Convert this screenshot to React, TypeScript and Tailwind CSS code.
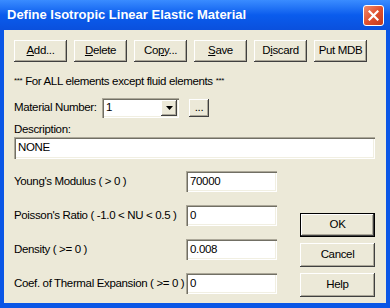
import React from "react";

const raised =
  "shadow-[inset_-1px_-1px_0_#404040,inset_1px_1px_0_#ffffff,inset_-2px_-2px_0_#aca899]";
const sunken =
  "shadow-[inset_1px_1px_0_#aca899,inset_2px_2px_0_#716f64,inset_-1px_-1px_0_#ffffff,inset_-2px_-2px_0_#f1efe2]";

function Btn({ children, className = "" }: { children: React.ReactNode; className?: string }) {
  return (
    <div
      className={`flex items-center justify-center bg-[#ece9d8] text-black whitespace-nowrap shrink-0 ${raised} ${className}`}
    >
      {children}
    </div>
  );
}

function Field({ value, className = "" }: { value: string; className?: string }) {
  return (
    <div className={`flex items-center bg-white pl-[4px] text-black shrink-0 ${sunken} ${className}`}>
      {value}
    </div>
  );
}

const props = [
  { label: "Young's Modulus ( > 0 )", value: "70000" },
  { label: "Poisson's Ratio ( -1.0 < NU < 0.5 )", value: "0" },
  { label: "Density ( >= 0 )", value: "0.008" },
  { label: "Coef. of Thermal Expansion ( >= 0 )", value: "0" },
];

export default function App() {
  return (
    <div className="w-[390px] h-[308px] flex flex-col bg-[#0a56e6] overflow-hidden font-['Liberation_Sans',Arial,sans-serif]">
      {/* ── Title bar ─────────────────────────────── */}
      <div className="h-[30px] flex items-center justify-between pl-[7px] pr-[6px] bg-gradient-to-b from-[#3a8cff] via-[#0a5ced] to-[#0a50dd]">
        <span className="text-white font-bold text-[13px]">
          Define Isotropic Linear Elastic Material
        </span>
        <div className="w-[21px] h-[21px] rounded-[3px] border border-white bg-gradient-to-br from-[#ef8a6c] via-[#e1502e] to-[#c23a1c] flex items-center justify-center">
          <svg width="11" height="11" viewBox="0 0 11 11">
            <path d="M1.5 1.5 L9.5 9.5 M9.5 1.5 L1.5 9.5" stroke="#fff" strokeWidth="2.2" strokeLinecap="square" />
          </svg>
        </div>
      </div>

      {/* ── Body ──────────────────────────────────── */}
      <div className="flex-1 mx-[4px] mb-[5px] bg-[#ece9d8] pl-[10px] pr-[11px] pt-[10px] flex flex-col text-black text-[11.5px] tracking-[-0.35px] whitespace-nowrap">
        <div className="flex gap-[7px]">
          <Btn className="w-[53px] h-[22px]"><span><u>A</u>dd...</span></Btn>
          <Btn className="w-[53px] h-[22px]"><span><u>D</u>elete</span></Btn>
          <Btn className="w-[53px] h-[22px]"><span>Co<u>p</u>y...</span></Btn>
          <Btn className="w-[53px] h-[22px]"><span><u>S</u>ave</span></Btn>
          <Btn className="w-[53px] h-[22px]"><span>D<u>i</u>scard</span></Btn>
          <Btn className="w-[53px] h-[22px]"><span>Put MDB</span></Btn>
        </div>

        <div className="mt-[12px] h-[14px] leading-[14px]">
          <span className="text-[8px] align-top">***</span> For ALL elements except fluid elements <span className="text-[8px] align-top">***</span>
        </div>

        <div className="mt-[10px] flex items-center h-[20px]">
          <span className="w-[88px] shrink-0">Material Number:</span>
          <div className={`w-[77px] h-[20px] shrink-0 bg-white flex items-center justify-between pl-[4px] pr-[2px] ${sunken}`}>
            <span>1</span>
            <div className={`w-[16px] h-[16px] bg-[#ece9d8] flex items-center justify-center ${raised}`}>
              <svg width="7" height="4" viewBox="0 0 7 4"><path d="M0 0 H7 L3.5 4 Z" fill="#000" /></svg>
            </div>
          </div>
          <Btn className="ml-[10px] w-[20px] h-[18px]">...</Btn>
        </div>

        <div className="mt-[4px] h-[14px] leading-[14px]">Description:</div>
        <Field value="NONE" className="mt-[1px] h-[22px] w-full" />

        <div className="mt-[12px] flex justify-between">
          <div className="flex flex-col gap-[13px]">
            {props.map((p) => (
              <div key={p.label} className="flex items-center h-[21px]">
                <span className="w-[172px] shrink-0">{p.label}</span>
                <Field value={p.value} className="w-[91px] h-[21px]" />
              </div>
            ))}
          </div>
          <div className="mt-[42px] flex flex-col gap-[6px]">
            <Btn className="w-[75px] h-[24px] border border-black">OK</Btn>
            <Btn className="w-[75px] h-[24px]">Cancel</Btn>
            <Btn className="w-[75px] h-[24px]">Help</Btn>
          </div>
        </div>
      </div>
    </div>
  );
}
